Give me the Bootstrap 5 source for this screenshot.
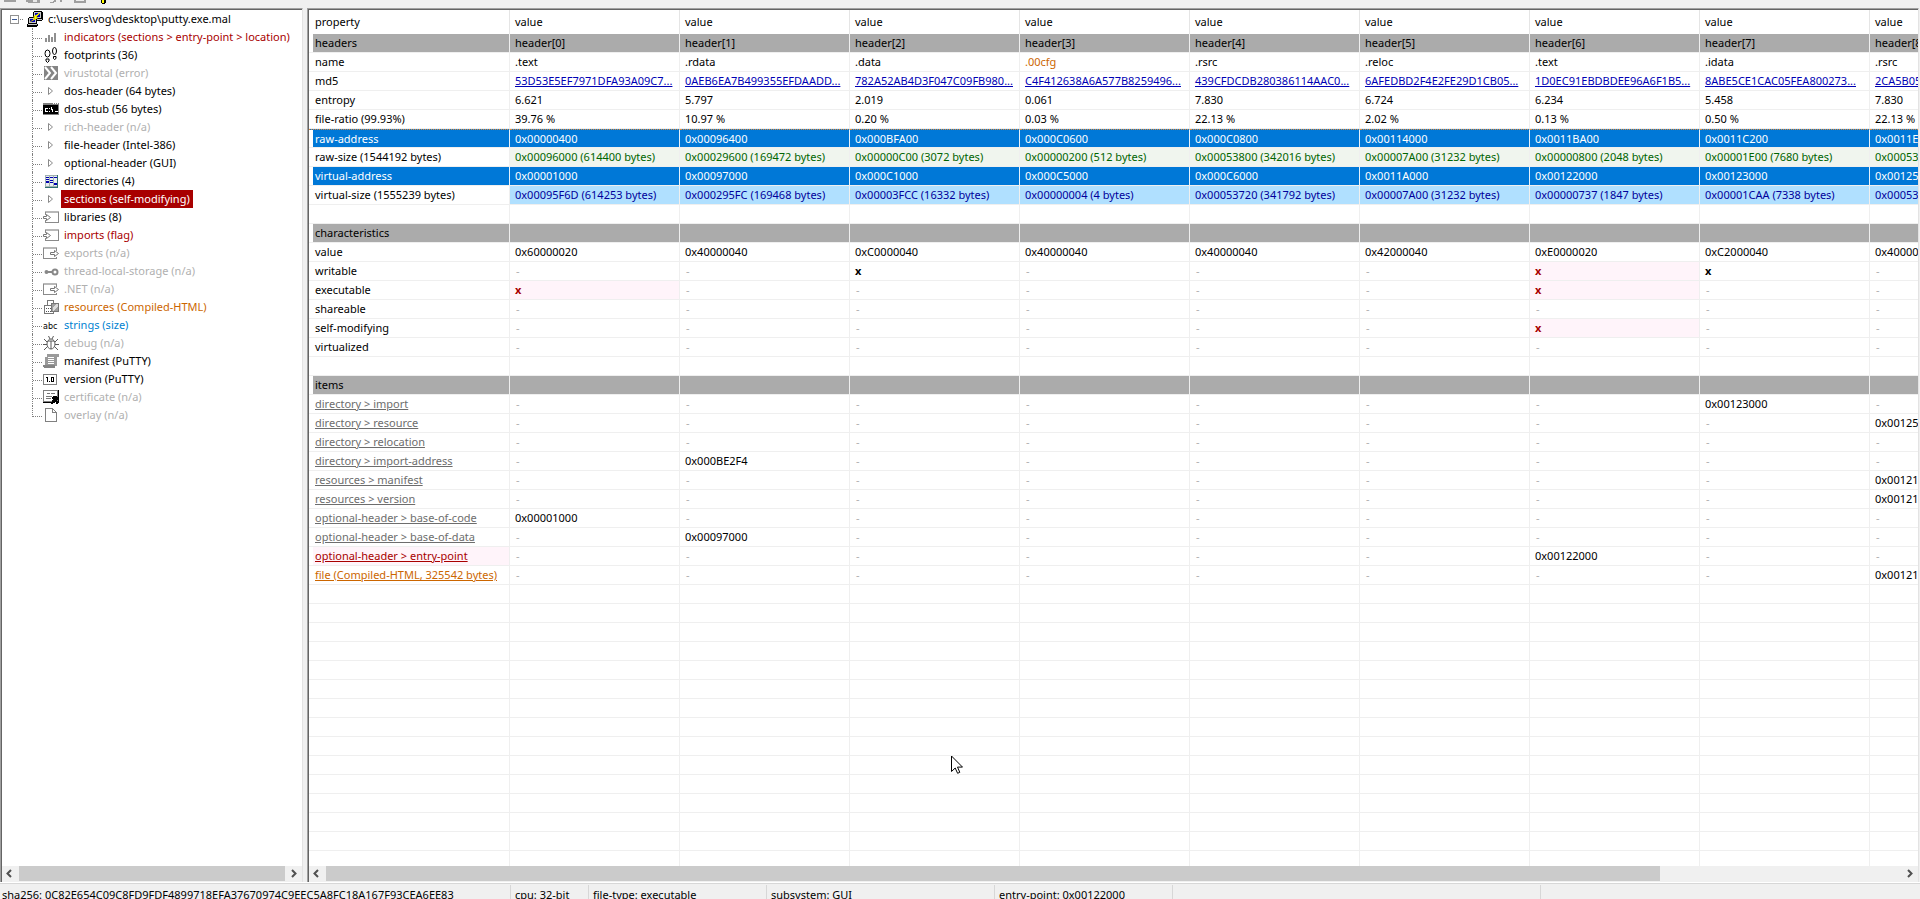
<!DOCTYPE html>
<html lang="en">
<head>
<meta charset="utf-8">
<meta name="viewport" content="width=device-width, initial-scale=1">
<title>pestudio - putty.exe.mal</title>
<link href="https://cdn.jsdelivr.net/npm/bootstrap@5.3.0/dist/css/bootstrap.min.css" rel="stylesheet">
<script src="https://cdn.jsdelivr.net/npm/bootstrap@5.3.0/dist/js/bootstrap.bundle.min.js"></script>
<style>
  :root { --face: #f0f0f0; --grid: #efefef; --red: #a80000; --orange: #cc6600; --dim: #b0b0b0; --sel: #0078d7; }
  body { font: 11px/18px "Noto Sans", "Open Sans", sans-serif; color: #000; background: var(--face); }
  svg { display: block; shape-rendering: crispEdges; flex: none; }
  .toolstrip { height: 8px; }
  .pane { background: #fff; border: 1px solid #a0a0a0; border-width: 1px 0 0 1px; box-shadow: inset 1px 1px 0 #646464; padding: 1px 0 0 1px; }
  .tree-pane { flex: 0 0 303px; border-right: 1px solid #e3e3e3; margin-right: 4px; }
  .list-pane { border-right: 1px solid #e3e3e3; margin-right: 1px; }
  .tree-row { height: 18px; padding-left: 30px; }
  .tree-row a { color: inherit; text-decoration: none; padding: 0 3px; }
  .tree-row svg { margin: 0 2px 0 1px; }
  .tree-row .guide { width: 10px; height: 18px; border-left: 1px dotted #808080; background: linear-gradient(90deg, #808080 50%, transparent 50%) 2px 10px / 2px 1px repeat-x; }
  .tree-row:last-child .guide { height: 11px; align-self: flex-start; border-bottom: 1px dotted #808080; background: none; }
  .root-row { padding-left: 7px; }
  .dim { color: var(--dim); } .red { color: var(--red); } .org { color: var(--orange); } .blu { color: #0082d1; }
  .picked a { background: var(--red); color: #fff; }
  .grid { table-layout: fixed; border-collapse: separate; border-spacing: 0; width: 1731px; }
  .grid th, .grid td { padding: 0 0 0 5px; border-right: 1px solid var(--grid); border-bottom: 1px solid var(--grid); white-space: nowrap; overflow: hidden; font-weight: 400; }
  .grid td, .grid tbody th { height: 19px; }
  .grid tr > :first-child { padding-left: 6px; }
  .grid thead th { height: 24px; border-bottom: 0; border-color: #e5e5e5; padding-bottom: 3px; padding-top: 2px; }
  .grid tbody a { color: #0000b4; text-decoration: underline; }
  .grid tbody th a { color: #6d6d6d; }
  .grid tbody th.red a { color: var(--red); } .grid tbody th.org a { color: var(--orange); }
  .grid .group > * { background: #ababab; }
  .grid .chosen > * { background: var(--sel); color: #fff; border-right-color: #e5f1fb; }
  .grid .focus-row > * { border-top: 1px dotted #e08a3c; line-height: 17px; }
  .grid .raw td { background: #f0f5ee; color: #006400; }
  .grid .virt td { background: #b0e0ff; color: #00009b; }
  .grid .flagged { background: #fff4fa; color: var(--red); }
  .grid tbody tr > th { box-shadow: inset 4px 0 0 #fff; padding-left: 6px; }
  .scrollbar { height: 17px; background: var(--face); color: #505050; border-bottom: 2px solid var(--face); }
  .scrollbar button { width: 17px; border: 0; background: none; padding: 0; color: inherit; }
  .thumb { background: #cbcbcb; height: 15px; }
  .status { height: 16px; border-top: 1px solid #d7d7d7; overflow: hidden; box-shadow: 0 -1px 0 #fff; }
  .status > div { border-right: 1px solid #d7d7d7; padding-left: 4px; margin-top: 1px; height: 20px; line-height: 19px; white-space: nowrap; flex: none; }
  .status > div:first-child { padding-left: 2px; }
  .pointer { left: 951px; top: 755px; }
</style>
</head>
<body class="vh-100 d-flex flex-column overflow-hidden">

<header class="toolstrip flex-shrink-0">
  <svg width="112" height="4" viewBox="0 0 112 4" fill="#a0a0a0">
    <path d="M4 0h12v2H4zM26 0h14v3H28v-1h-2z"/><path d="M33 0h4v2h-4z" fill="#e8e8e8"/>
    <path d="M54 0h2v2h-2v1h-4V2h3zM60 0h2v2h-2z"/><path d="M74 0h12v3H74z"/><path d="M76 0h8v1h-8z" fill="#eee"/>
    <path d="M101 0h5v3h-1v1h-3V3h-1z" fill="#000"/><path d="M102 0h2v3h-2z" fill="#ff0"/>
  </svg>
</header>

<main class="d-flex flex-grow-1" style="min-height:0">
  <nav class="pane tree-pane d-flex flex-column" aria-label="file tree">
    <div class="flex-grow-1 overflow-hidden" id="tree"></div>
    <div class="scrollbar d-flex">
      <button type="button" aria-label="scroll left"><svg width="17" height="15" viewBox="0 0 17 15" fill="none" stroke="currentColor" stroke-width="2" style="shape-rendering:auto"><path d="M9 4L5.500 7.500L9 11"/></svg></button>
      <div class="thumb flex-grow-1"></div>
      <button type="button" aria-label="scroll right"><svg width="17" height="15" viewBox="0 0 17 15" fill="none" stroke="currentColor" stroke-width="2" style="shape-rendering:auto"><path d="M7 4L10.500 7.500L7 11"/></svg></button>
    </div>
  </nav>

  <section class="pane list-pane d-flex flex-column flex-grow-1" style="min-width:0">
    <div class="flex-grow-1 overflow-hidden" style="min-height:0">
      <table class="grid">
        <colgroup><col style="width:201px"><col span="9" style="width:170px"></colgroup>
        <thead><tr id="head"></tr></thead>
        <tbody id="rows"></tbody>
      </table>
    </div>
    <div class="scrollbar d-flex">
      <button type="button" aria-label="scroll left"><svg width="17" height="15" viewBox="0 0 17 15" fill="none" stroke="currentColor" stroke-width="2" style="shape-rendering:auto"><path d="M9 4L5.500 7.500L9 11"/></svg></button>
      <div class="flex-grow-1"><div class="thumb" style="width:84.700%"></div></div>
      <button type="button" aria-label="scroll right"><svg width="17" height="15" viewBox="0 0 17 15" fill="none" stroke="currentColor" stroke-width="2" style="shape-rendering:auto"><path d="M7 4L10.500 7.500L7 11"/></svg></button>
    </div>
  </section>
</main>

<footer class="status d-flex flex-shrink-0">
  <div style="width:511px">sha256: 0C82E654C09C8FD9FDF4899718EFA37670974C9EEC5A8FC18A167F93CEA6EE83</div>
  <div style="width:78px">cpu: 32-bit</div>
  <div style="width:178px">file-type: executable</div>
  <div style="width:228px">subsystem: GUI</div>
  <div style="width:178px">entry-point: 0x00122000</div>
  <div style="width:368px"></div>
</footer>

<svg class="pointer position-absolute" width="12" height="19" viewBox="0 0 12 19" fill="#fff" stroke="#000" style="shape-rendering:auto" aria-hidden="true"><path d="M.5 1v15.500l3.700-3.500 2.400 5.300 2.200-1-2.300-5.200h5z"/></svg>

<script>
const arrow = '<path d="M5.500 4.500v7l4-3.500z" fill="#fff" stroke="#8a8a8a" style="shape-rendering:auto"/>';
const boxIn = '<path d="M2 2h14v2H2z" fill="#b8b8b8"/><path d="M2.500 3v3M2.500 11v2.500h13V3" fill="none" stroke="#8a8a8a"/><path d="M.5 7.500h3v-2l4 3-4 3v-2h-3z" fill="#fff" stroke="#777" style="shape-rendering:auto"/>';
const boxOut = '<path d="M0 2h14v2H0z" fill="#b8b8b8"/><path d="M.5 3v10.500h13V12M13.500 3v3" fill="none" stroke="#8a8a8a"/><path d="M7.500 7.500h4v-2l4 3-4 3v-2h-4z" fill="#fff" stroke="#777" style="shape-rendering:auto"/>';
const icon = {
  bars: '<path d="M2 9h2v4H2zM5 6h2v7H5zM8 8h2v5H8zM11 4h2v9h-2z" fill="#909090"/>',
  feet: '<g fill="#fff" stroke="#000" style="shape-rendering:auto"><ellipse cx="4.500" cy="6.500" rx="2.500" ry="3.500"/><path d="M3 12h3v2l-1.500 1.500L3 14z"/><ellipse cx="11.500" cy="4" rx="2" ry="3.500"/><path d="M10.500 9.500h2.500v2l-1.500 1-1-1z"/></g>',
  vt: '<path d="M1 1h14v14H1z" fill="#858585"/><path d="M2 2l5 6-5 6M8 2l5 6-5 6" fill="none" stroke="#fff" stroke-width="2" style="shape-rendering:auto"/>',
  arrow,
  dos: '<path d="M0 2h16v12H0z" fill="#808080"/><path d="M0 4h15v9H0z" fill="#000"/><path d="M10 2h1v1h-1zM12 2h1v1h-1zM14 2h1v1h-1z" fill="#fff"/><path d="M2 7h3v1H3v2h2v1H2zM6 7h1v1H6zM6 10h1v1H6zM8 6h1v2h1v3H9V9H8zM12 10h3v1h-3z" fill="#fff"/>',
  dirs: '<path d="M2 2h12v12H2z" fill="#e8eef0"/><path d="M2 2h12v1H2zM2 2h1v12H2zM6 2h1v12H6zM10 2h1v12h-1zM2 13h12v1H2z" fill="#a0b0b0"/><path d="M14 2h1v13H2v-1h12z" fill="#2f7070"/><path d="M3 4h3v1H3zM7 4h3v1H7zM11 4h3v1h-3zM3 6h3v1H3zM7 7h3v1H7zM3 8h3v2H3zM7 9h3v1H7zM11 10h3v2h-3z" fill="#0000b0"/>',
  boxIn, boxOut,
  key: '<g fill="none" stroke="#888" stroke-width="2" style="shape-rendering:auto"><circle cx="12" cy="9" r="2.500"/><circle cx="3.500" cy="9" r="1"/><path d="M4 9h6"/></g>',
  res: '<g fill="#fff" stroke="#777"><path d="M4.500 1.500h6v5h-6zM1.500 6.500h9v8h-9z"/><path d="M8.500 4.500h7v8h-7z" fill="#a0a0a0"/></g><path d="M3 9h1v1H3zM5 9h1v1H5zM7 9h1v1H7zM3 12h1v1H3zM5 12h1v1H5zM7 12h1v1H7z" fill="#555"/><path d="M13 5h2v2l-5 5V9z" fill="#ddd"/>',
  abc: '<text x="0" y="12" font-family="DejaVu Sans" font-size="8" fill="#000">abc</text>',
  bug: '<g fill="none" stroke="#5a5a5a" style="shape-rendering:auto"><ellipse cx="8" cy="9" rx="4" ry="5"/><path d="M8 6v8M5 6h6M5.500 1l1.500 3M10.500 1L9 4M4 7L1 4M12 7l3-3M0 9.500h4M12 9.500h4M4.500 11.500L1 15M11.500 11.500L15 15"/></g>',
  scroll: '<path d="M4 1h12v3h-2v9H2V4h2z" fill="#9a9a9a"/><path d="M0 12h12v3H1z" fill="#858585"/><path d="M5 4h6v1H5zM5 6h6v1H5zM5 8h6v1H5zM5 10h6v1H5z" fill="#fff"/>',
  ver: '<path d="M.5 3.500h13v10H.5z" fill="#fff" stroke="#808080"/><path d="M3 6h2v5H4V7H3zM6 10h1v1H6zM8 6h3v5H8zM9 7v3h1V7z" fill="#000" fill-rule="evenodd"/>',
  cert: '<path d="M.5 1.500h14v11H.5z" fill="#fff" stroke="#808080"/><path d="M15 1h1v13h-1zM0 13h9v1H0z" fill="#000"/><path d="M4 4h3v1H4zM8 4h4v1H8zM3 7h6v1H3zM3 9h5v1H3z" fill="#777"/><path d="M10 7h4v1h1v3h-1v1h1v3h-2v-2h-1v1h-2v1H8v-2h1v-2h1v-1H9V8h1z" fill="#000"/>',
  page: '<path d="M2.500 1.500h7l4 4v9h-11z M9.500 1.500v4h4" fill="#fff" stroke="#808080"/>'
};
const putty = '<svg width="16" height="16" viewBox="0 0 16 16"><path d="M7 0h8v1h1v8h-1v1H9V8H6V1h1z" fill="#000"/><path d="M7 1h7v6H7zM8 8h7v1H8z" fill="#c8c8c8"/><path d="M8 2h5v4H8z" fill="#0000c0"/><path d="M2 6h8v7h1v2h-1v1H0v-3h1V7h1z" fill="#000"/><path d="M2 7h7v5H2zM1 13h9v1H1z" fill="#c8c8c8"/><path d="M3 8h5v3H3z" fill="#0000c0"/><path d="M12 2L6 6l2 1-5 4 8-4-2-1 4-4z" fill="#ff0" stroke="#b0a800" stroke-width=".5"/></svg>';
const tree = [
  ['bars','indicators (sections > entry-point > location)','red'],
  ['feet','footprints (36)',''],
  ['vt','virustotal (error)','dim'],
  ['arrow','dos-header (64 bytes)',''],
  ['dos','dos-stub (56 bytes)',''],
  ['arrow','rich-header (n/a)','dim'],
  ['arrow','file-header (Intel-386)',''],
  ['arrow','optional-header (GUI)',''],
  ['dirs','directories (4)',''],
  ['arrow','sections (self-modifying)','picked'],
  ['boxIn','libraries (8)',''],
  ['boxIn','imports (flag)','red'],
  ['boxOut','exports (n/a)','dim'],
  ['key','thread-local-storage (n/a)','dim'],
  ['boxOut','.NET (n/a)','dim'],
  ['res','resources (Compiled-HTML)','org'],
  ['abc','strings (size)','blu'],
  ['bug','debug (n/a)','dim'],
  ['scroll','manifest (PuTTY)',''],
  ['ver','version (PuTTY)',''],
  ['cert','certificate (n/a)','dim'],
  ['page','overlay (n/a)','dim']
];
document.getElementById('tree').innerHTML =
  '<div class="tree-row root-row d-flex align-items-center">' +
  '<svg width="14" height="11" viewBox="0 0 14 11"><path d="M.5 1.500h8v8h-8z" fill="#fff" stroke="#919191"/><path d="M2 5h5v1H2z" fill="#3c5a96"/><path d="M10 5h1v1h-1zM12 5h1v1h-1z" fill="#808080"/></svg>' +
  putty + '<a href="#">c:\\users\\vog\\desktop\\putty.exe.mal</a></div>' +
  tree.map(([i, t, c]) => `<div class="tree-row d-flex align-items-center ${c}"><span class="guide"></span><svg width="16" height="16" viewBox="0 0 16 16">${icon[i]}</svg><a href="#">${t}</a></div>`).join('');

const d = '-';
const none = () => Array(9).fill(d);
const at = (pairs) => none().map((v, i) => pairs[i] || v);
const rows = [
  ['headers', [0,1,2,3,4,5,6,7,8].map(n => `header[${n}]`), 'group'],
  ['name', ['.text','.rdata','.data','~.00cfg','.rsrc','.reloc','.text','.idata','.rsrc']],
  ['md5', ['53D53E5EF7971DFA93A09C7...','0AEB6EA7B499355EFDAADD...','782A52AB4D3F047C09FB980...','C4F412638A6A577B8259496...','439CFDCDB280386114AAC0...','6AFEDBD2F4E2FE29D1CB05...','1D0EC91EBDBDEE96A6F1B5...','8ABE5CE1CAC05FEA800273...','2CA5B05'], 'links'],
  ['entropy', ['6.621','5.797','2.019','0.061','7.830','6.724','6.234','5.458','7.830']],
  ['file-ratio (99.93%)', ['39.76 %','10.97 %','0.20 %','0.03 %','22.13 %','2.02 %','0.13 %','0.50 %','22.13 %']],
  ['raw-address', ['0x00000400','0x00096400','0x000BFA00','0x000C0600','0x000C0800','0x00114000','0x0011BA00','0x0011C200','0x0011E0'], 'chosen focus-row'],
  ['raw-size (1544192 bytes)', ['0x00096000 (614400 bytes)','0x00029600 (169472 bytes)','0x00000C00 (3072 bytes)','0x00000200 (512 bytes)','0x00053800 (342016 bytes)','0x00007A00 (31232 bytes)','0x00000800 (2048 bytes)','0x00001E00 (7680 bytes)','0x000538'], 'raw'],
  ['virtual-address', ['0x00001000','0x00097000','0x000C1000','0x000C5000','0x000C6000','0x0011A000','0x00122000','0x00123000','0x001250'], 'chosen'],
  ['virtual-size (1555239 bytes)', ['0x00095F6D (614253 bytes)','0x000295FC (169468 bytes)','0x00003FCC (16332 bytes)','0x00000004 (4 bytes)','0x00053720 (341792 bytes)','0x00007A00 (31232 bytes)','0x00000737 (1847 bytes)','0x00001CAA (7338 bytes)','0x000536'], 'virt'],
  ['', Array(9).fill('')],
  ['characteristics', Array(9).fill(''), 'group'],
  ['value', ['0x60000020','0x40000040','0xC0000040','0x40000040','0x40000040','0x42000040','0xE0000020','0xC2000040','0x400000']],
  ['writable', at({2:'x',6:'!',7:'x'})],
  ['executable', at({0:'!',6:'!'})],
  ['shareable', none()],
  ['self-modifying', at({6:'!'})],
  ['virtualized', none()],
  ['', Array(9).fill('')],
  ['items', Array(9).fill(''), 'group'],
  ['@directory > import', at({7:'0x00123000'})],
  ['@directory > resource', at({8:'0x001250'})],
  ['@directory > relocation', none()],
  ['@directory > import-address', at({1:'0x000BE2F4'})],
  ['@resources > manifest', at({8:'0x001219'})],
  ['@resources > version', at({8:'0x001216'})],
  ['@optional-header > base-of-code', at({0:'0x00001000'})],
  ['@optional-header > base-of-data', at({1:'0x00097000'})],
  ['@optional-header > entry-point', at({6:'0x00122000'}), '', 'red flagged'],
  ['@file (Compiled-HTML, 325542 bytes)', at({8:'0x00121'}), '', 'org']
];
while (rows.length < 44) rows.push(['', Array(9).fill('')]);
const cell = (v, kind) =>
  v === '!' ? '<td class="flagged"><b>x</b></td>' :
  v === 'x' ? '<td><b>x</b></td>' :
  v === d ? '<td class="dim">&#8202;-</td>' :
  v[0] === '~' ? `<td class="org">${v.slice(1)}</td>` :
  kind === 'links' ? `<td><a href="#">${v}</a></td>` : `<td>${v}</td>`;
document.getElementById('head').innerHTML = '<th scope="col">property</th>' + '<th scope="col">value</th>'.repeat(9);
document.getElementById('rows').innerHTML = rows.map(([name, vals, kind = '', own = '']) =>
  `<tr class="${kind}"><th scope="row" class="${own}">${name[0] === '@' ? `<a href="#">${name.slice(1)}</a>` : name}</th>${vals.map(v => cell(v, kind)).join('')}</tr>`).join('');
</script>
</body>
</html>
